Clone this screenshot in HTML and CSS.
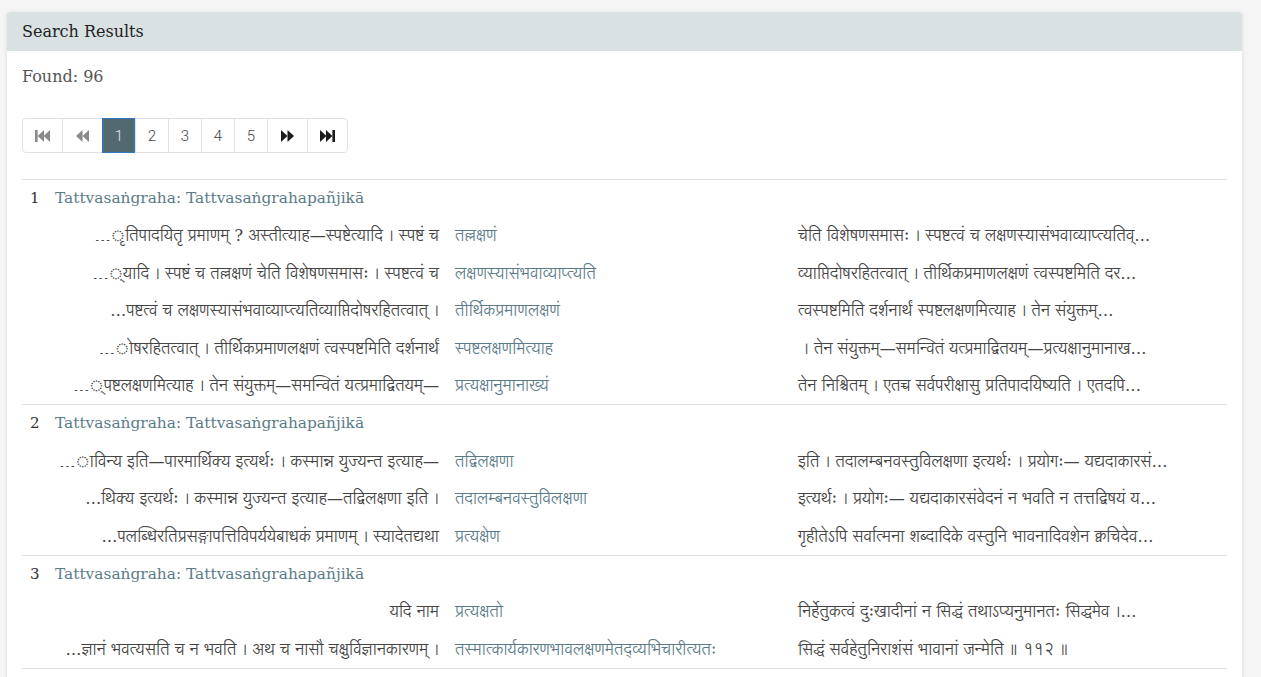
FILE: index.html
```html
<!DOCTYPE html>
<html lang="en">
<head>
<meta charset="utf-8">
<title>Search Results</title>
<link rel="stylesheet" href="styles.css">
</head>
<body>
<div class="card">
  <div class="card-header">Search Results</div>
  <div class="card-body">
    <div class="found">Found: 96</div>
    <nav class="pager">
      <span class="pg pg-icon disabled"><svg width="15" height="12" viewBox="0 0 15 12"><rect x="0" y="0" width="2.6" height="12"/><polygon points="9,0 2.6,6 9,12"/><polygon points="15,0 8.6,6 15,12"/></svg></span>
      <span class="pg pg-icon disabled"><svg width="13" height="12" viewBox="0 0 13 12"><polygon points="6.5,0 0,6 6.5,12"/><polygon points="13,0 6.5,6 13,12"/></svg></span>
      <span class="pg active">1</span>
      <span class="pg">2</span>
      <span class="pg">3</span>
      <span class="pg">4</span>
      <span class="pg">5</span>
      <span class="pg pg-icon"><svg width="13" height="12" viewBox="0 0 13 12"><polygon points="0,0 6.5,6 0,12"/><polygon points="6.5,0 13,6 6.5,12"/></svg></span>
      <span class="pg pg-icon"><svg width="15" height="12" viewBox="0 0 15 12"><polygon points="0,0 6.4,6 0,12"/><polygon points="6,0 12.4,6 6,12"/><rect x="12.4" y="0" width="2.6" height="12"/></svg></span>
    </nav>

    <div class="results">
      <section class="group">
        <div class="title-row"><span class="num">1</span><a class="title">Tattvasaṅgraha: Tattvasaṅgrahapañjikā</a></div>
        <div class="kwic"><span class="left">…ृतिपादयितृ प्रमाणम् ? अस्तीत्याह—स्पष्टेत्यादि । स्पष्टं च</span><a class="kw">तल्लक्षणं</a><span class="right">चेति विशेषणसमासः । स्पष्टत्वं च लक्षणस्यासंभवाव्याप्त्यतिव्…</span></div>
        <div class="kwic"><span class="left">…्यादि । स्पष्टं च तल्लक्षणं चेति विशेषणसमासः । स्पष्टत्वं च</span><a class="kw">लक्षणस्यासंभवाव्याप्त्यति</a><span class="right">व्याप्तिदोषरहितत्वात् । तीर्थिकप्रमाणलक्षणं त्वस्पष्टमिति दर…</span></div>
        <div class="kwic"><span class="left">…पष्टत्वं च लक्षणस्यासंभवाव्याप्त्यतिव्याप्तिदोषरहितत्वात् ।</span><a class="kw">तीर्थिकप्रमाणलक्षणं</a><span class="right">त्वस्पष्टमिति दर्शनार्थं स्पष्टलक्षणमित्याह । तेन संयुक्तम्…</span></div>
        <div class="kwic"><span class="left">…ोषरहितत्वात् । तीर्थिकप्रमाणलक्षणं त्वस्पष्टमिति दर्शनार्थं</span><a class="kw">स्पष्टलक्षणमित्याह</a><span class="right">&nbsp;। तेन संयुक्तम्—समन्वितं यत्प्रमाद्वितयम्—प्रत्यक्षानुमानाख…</span></div>
        <div class="kwic"><span class="left">…्पष्टलक्षणमित्याह । तेन संयुक्तम्—समन्वितं यत्प्रमाद्वितयम्—</span><a class="kw">प्रत्यक्षानुमानाख्यं</a><span class="right">तेन निश्चितम् । एतच्च सर्वपरीक्षासु प्रतिपादयिष्यति । एतदपि…</span></div>
      </section>
      <section class="group">
        <div class="title-row"><span class="num">2</span><a class="title">Tattvasaṅgraha: Tattvasaṅgrahapañjikā</a></div>
        <div class="kwic"><span class="left">…ाविन्य इति—पारमार्थिक्य इत्यर्थः । कस्मान्न युज्यन्त इत्याह—</span><a class="kw">तद्विलक्षणा</a><span class="right">इति । तदालम्बनवस्तुविलक्षणा इत्यर्थः । प्रयोगः— यद्यदाकारसं…</span></div>
        <div class="kwic"><span class="left">…थिक्य इत्यर्थः । कस्मान्न युज्यन्त इत्याह—तद्विलक्षणा इति ।</span><a class="kw">तदालम्बनवस्तुविलक्षणा</a><span class="right">इत्यर्थः । प्रयोगः— यद्यदाकारसंवेदनं न भवति न तत्तद्विषयं य…</span></div>
        <div class="kwic"><span class="left">…पलब्धिरतिप्रसङ्गापत्तिविपर्ययेबाधकं प्रमाणम् । स्यादेतद्यथा</span><a class="kw">प्रत्यक्षेण</a><span class="right">गृहीतेऽपि सर्वात्मना शब्दादिके वस्तुनि भावनादिवशेन क्वचिदेव…</span></div>
      </section>
      <section class="group">
        <div class="title-row"><span class="num">3</span><a class="title">Tattvasaṅgraha: Tattvasaṅgrahapañjikā</a></div>
        <div class="kwic"><span class="left">यदि नाम</span><a class="kw">प्रत्यक्षतो</a><span class="right">निर्हेतुकत्वं दुःखादीनां न सिद्धं तथाऽप्यनुमानतः सिद्धमेव ।…</span></div>
        <div class="kwic"><span class="left">…ज्ञानं भवत्यसति च न भवति । अथ च नासौ चक्षुर्विज्ञानकारणम् ।</span><a class="kw">तस्मात्कार्यकारणभावलक्षणमेतद्व्यभिचारीत्यतः</a><span class="right">सिद्धं सर्वहेतुनिराशंसं भावानां जन्मेति ॥ ११२ ॥</span></div>
      </section>
    </div>
  </div>
</div>
</body>
</html>
```

FILE: styles.css
```css
html, body {
  margin: 0;
  padding: 0;
}
body {
  background: #f5f5f5;
  font-family: "DejaVu Serif", serif;
  font-size: 15px;
  color: #444;
  padding: 12px 19px 0 7px;
  overflow: hidden;
  height: 677px;
  box-sizing: border-box;
}
.card {
  background: #fff;
  border-radius: 3px;
  box-shadow: 0 1px 4px rgba(0, 0, 0, 0.12);
  overflow: hidden;
}
.card-header {
  background: #dae1e3;
  height: 39px;
  line-height: 39px;
  padding: 0 15px;
  color: #222;
  font-size: 16px;
}
.card-body {
  padding: 15px 15px 20px;
}
.found {
  line-height: 22px;
  font-size: 16px;
  color: #555;
  margin-bottom: 30px;
}
.pager {
  display: inline-flex;
  border: 1px solid #dee2e6;
  border-radius: 4px;
  height: 33px;
  margin-bottom: 26px;
}
.pg {
  display: flex;
  align-items: center;
  justify-content: center;
  width: 32px;
  border-left: 1px solid #dee2e6;
  font-family: Roboto, "Liberation Sans", sans-serif;
  font-weight: 300;
  font-size: 15px;
  color: #444;
}
.pg:first-child {
  border-left: 0;
}
.pg-icon {
  width: 39px;
  fill: #1c1c1c;
}
.pg-icon.disabled {
  fill: #8a8a8a;
}
.pg.active {
  background: #536970;
  border-left-color: transparent;
  color: #e4e8ea;
  box-shadow: inset 0 0 0 1px #2c78c4;
  margin: -1px 0;
}
.results {
  border-top: 1px solid #dee2e6;
}
.group {
  border-bottom: 1px solid #dee2e6;
}
.title-row {
  height: 37.4px;
  line-height: 37.4px;
  padding-left: 8px;
  font-size: 15.4px;
}
.num {
  display: inline-block;
  width: 25px;
  color: #333;
  font-size: 15px;
}
.title,
.kw {
  color: #5b7b89;
  text-decoration: none;
}
.kwic {
  display: grid;
  grid-template-columns: 425px 343px 1fr;
  height: 37.4px;
  line-height: 38px;
  white-space: nowrap;
  font-family: "DejaVu Serif", "Lohit Devanagari", "Noto Serif Devanagari", Gargi, FreeSerif, serif;
  font-size: 16px;
}
.kwic > * {
  overflow: hidden;
  padding: 0 8px;
}
.left {
  text-align: right;
}
.right {
  color: #444;
}
```
